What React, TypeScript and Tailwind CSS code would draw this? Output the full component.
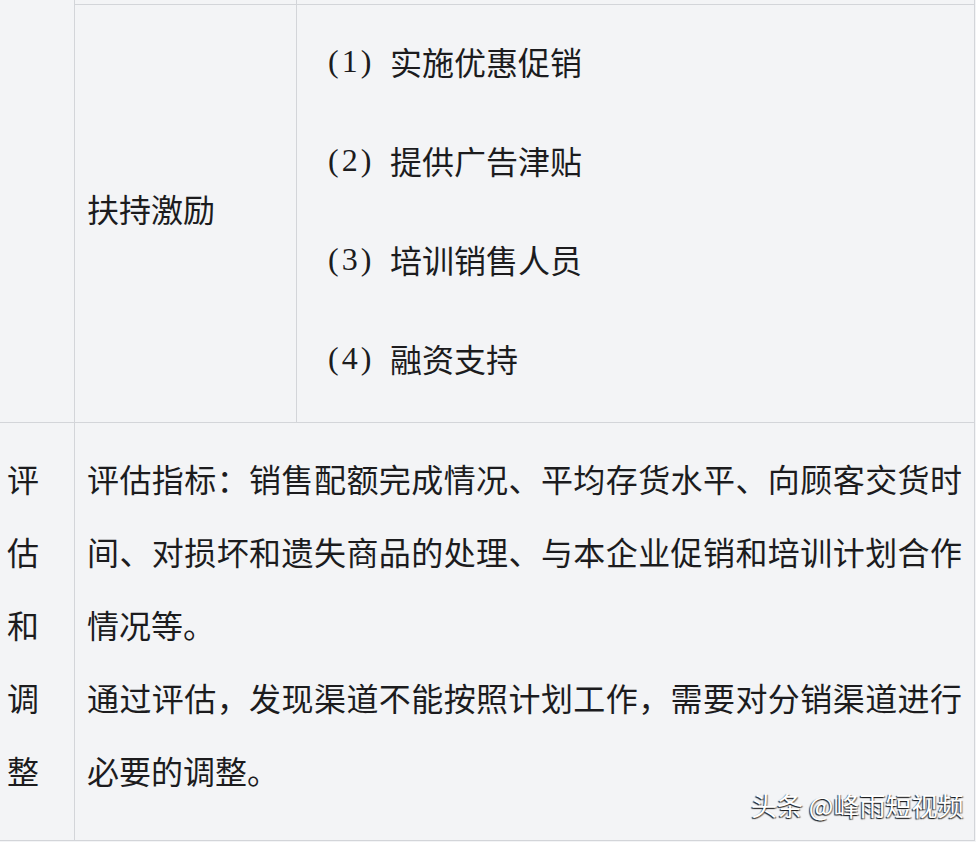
import React from 'react';

const cjk = "font-['Noto_Sans_CJK_SC',sans-serif]";

const items = [
  { n: '1', text: '实施优惠促销' },
  { n: '2', text: '提供广告津贴' },
  { n: '3', text: '培训销售人员' },
  { n: '4', text: '融资支持' },
];

const evalLines = [
  { text: '评估指标：销售配额完成情况、平均存货水平、向顾客交货时', full: true },
  { text: '间、对损坏和遗失商品的处理、与本企业促销和培训计划合作', full: true },
  { text: '情况等。', full: false },
  { text: '通过评估，发现渠道不能按照计划工作，需要对分销渠道进行', full: true },
  { text: '必要的调整。', full: false },
];

const App: React.FC = () => {
  return (
    <div className={`relative w-[976px] h-[842px] overflow-hidden bg-[#f3f4f6] text-[#1c1c1e] ${cjk}`}>
      {/* previous row tail */}
      <div className="flex h-[5px]">
        <div className="w-[75px] shrink-0 border-r border-[#d3d5d9]" />
        <div className="w-[222px] shrink-0 border-r border-b border-[#d3d5d9]" />
        <div className="w-[678px] shrink-0 border-r border-b border-[#d3d5d9]" />
      </div>

      {/* 扶持激励 */}
      <div className="flex h-[418px] w-[975px] border-b border-[#d3d5d9]">
        <div className="w-[75px] shrink-0 border-r border-[#d3d5d9]" />
        <div className="w-[222px] shrink-0 border-r border-[#d3d5d9] flex items-center pl-[12px] pb-[12px] text-[32px] leading-[40px]">
          扶持激励
        </div>
        <div className="w-[678px] shrink-0 border-r border-[#d3d5d9] flex flex-col justify-center pl-[11px] pb-[9px]">
          {items.map((it) => (
            <div key={it.n} className="h-[99px] flex items-center text-[32px] leading-[40px] whitespace-nowrap">
              <span className="inline-block w-[82px] pl-[20px] font-['Liberation_Serif',serif] tracking-[3px]">
                ({it.n})
              </span>
              <span>{it.text}</span>
            </div>
          ))}
        </div>
      </div>

      {/* 评估和调整 */}
      <div className="flex h-[418px] w-[975px] border-b border-[#d3d5d9]">
        <div className="w-[75px] shrink-0 border-r border-[#d3d5d9] pt-[19px] pl-[7px] text-[32px] leading-[73px]">
          {['评', '估', '和', '调', '整'].map((c) => (
            <div key={c}>{c}</div>
          ))}
        </div>
        <div className="w-[900px] shrink-0 border-r border-[#d3d5d9] pt-[19px] pl-[12px] pr-[12px] text-[32px] leading-[73px]">
          {evalLines.map((l, i) => (
            <div
              key={i}
              className={l.full ? 'whitespace-nowrap text-justify [text-align-last:justify]' : 'whitespace-nowrap'}
            >
              {l.text}
            </div>
          ))}
        </div>
      </div>

      {/* watermark */}
      <div className="absolute left-[751px] top-[788px] text-[26px] leading-[34px] text-white whitespace-nowrap [text-shadow:-1px_1px_1px_rgba(0,0,0,0.85),1px_1px_1px_rgba(0,0,0,0.5)]">
        头条 @峰雨短视频
      </div>
    </div>
  );
};

export default App;
